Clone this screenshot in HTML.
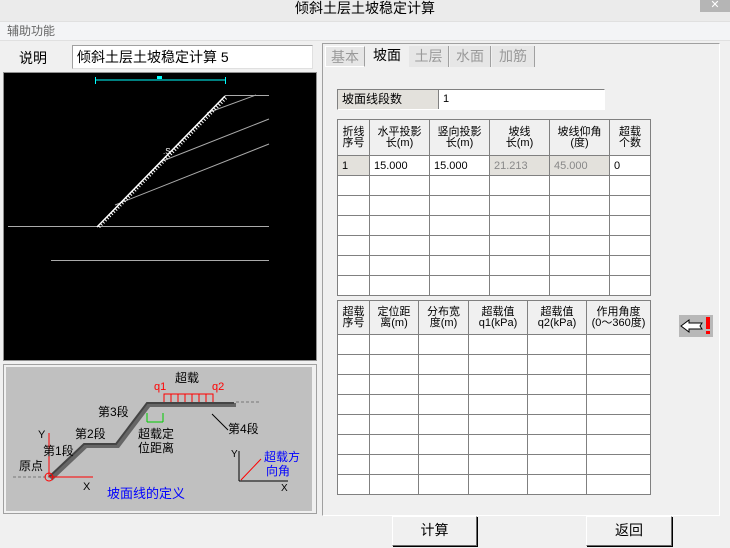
<!DOCTYPE html><html><head><meta charset="utf-8"><style>
*{margin:0;padding:0;box-sizing:border-box}
body{width:730px;height:548px;background:#f0f0f0;position:relative;overflow:hidden;font-family:"Liberation Sans","Noto Sans CJK SC",sans-serif;font-size:12px;color:#000}
.a{position:absolute}
table{border-collapse:collapse;position:absolute;table-layout:fixed;background:#fff}
td{border:1px solid #808080;height:20px;font-size:11px;padding:0 4px;white-space:nowrap;overflow:hidden}
th{border:1px solid #808080;background:#f0f0f0;font-weight:normal;font-size:11px;line-height:11px;text-align:center;white-space:nowrap}
.btn{position:absolute;background:#f0f0f0;border:1px solid #fff;border-right-color:#696969;border-bottom-color:#696969;box-shadow:1px 1px 0 #000;font-size:14px;text-align:center;line-height:27px}
</style></head><body>
<div class="a" style="left:0;top:0;width:730px;height:21px;background:#ebebeb;text-align:center;font-size:14px;line-height:16px">倾斜土层土坡稳定计算</div>
<div class="a" style="left:700px;top:0;width:30px;height:12px;background:#b5b5b5;color:#fff;text-align:center;font-size:11px;line-height:11px">✕</div>
<div class="a" style="left:0;top:21px;width:730px;height:20px;background:#f3f4f6;border-top:1px solid #e0e0e0;border-bottom:1px solid #e0e0e0;padding-left:7px;font-size:12px;line-height:18px;color:#666">辅助功能</div>
<div class="a" style="left:19px;top:48px;font-size:14px">说明</div>
<div class="a" style="left:72px;top:45px;width:241px;height:24px;background:#fff;border:1px solid #a0a0a0;border-right-color:#e0e0e0;border-bottom-color:#e0e0e0;font-size:14px;line-height:22px;padding-left:4px">倾斜土层土坡稳定计算 5</div>
<div class="a" style="left:3px;top:72px;width:314px;height:289px;background:#000;border:1px solid #909090;overflow:hidden">
<svg width="320" height="300" style="position:absolute;left:-4px;top:-73px">
<g stroke="#0ff" stroke-width="1"><line x1="95" y1="80" x2="225" y2="80"/><line x1="95.5" y1="77" x2="95.5" y2="84"/><line x1="225.5" y1="77" x2="225.5" y2="84"/></g>
<rect x="157" y="76" width="5" height="3" fill="#0ff"/>
<g stroke="#aaa" stroke-width="1"><line x1="225" y1="95.5" x2="269" y2="95.5"/><line x1="207" y1="113" x2="256" y2="95"/><line x1="160" y1="162" x2="269" y2="119"/><line x1="115" y1="205" x2="269" y2="144"/><line x1="8" y1="226.5" x2="269" y2="226.5"/><line x1="51" y1="260.5" x2="269" y2="260.5"/></g>
<line x1="97" y1="227" x2="225" y2="96" stroke="#fff" stroke-width="1.5"/>
<line x1="99" y1="227" x2="227" y2="97" stroke="#fff" stroke-width="3" stroke-dasharray="1 2"/>
<text x="163" y="154" fill="#fff" font-size="8">.S</text>
</svg></div>
<div class="a" style="left:3px;top:364px;width:314px;height:150px;background:#f0f0f0;border:1px solid #a0a0a0">
<div class="a" style="left:2px;top:2px;width:306px;height:144px;background:#c0c0c0;overflow:hidden">
<svg width="320" height="520" style="position:absolute;left:-5px;top:-366px">
<line x1="12" y1="476" x2="48" y2="476" stroke="#777" stroke-dasharray="3 2"/>
<line x1="235" y1="401" x2="258" y2="401" stroke="#777" stroke-dasharray="3 2"/>
<polyline points="50,478 85,445 117,445 148,404 235,404" fill="none" stroke="#666" stroke-width="4"/>
<polyline points="48,476 83,443 115,443 146,402 233,402" fill="none" stroke="#444" stroke-width="2"/>
<g stroke="#f00" fill="none"><line x1="48" y1="476" x2="92" y2="476"/><line x1="48" y1="476" x2="48" y2="432"/><circle cx="48" cy="476" r="4"/><polyline points="163,401 163,393 212,393 212,401"/><line x1="170" y1="393" x2="170" y2="401"/><line x1="177" y1="393" x2="177" y2="401"/><line x1="184" y1="393" x2="184" y2="401"/><line x1="191" y1="393" x2="191" y2="401"/><line x1="198" y1="393" x2="198" y2="401"/><line x1="205" y1="393" x2="205" y2="401"/><line x1="240" y1="479" x2="260" y2="458"/></g>
<g stroke="#0c0"><line x1="146" y1="412" x2="146" y2="421"/><line x1="162" y1="412" x2="162" y2="421"/><line x1="146" y1="421" x2="162" y2="421"/></g>
<line x1="211" y1="413" x2="227" y2="429" stroke="#000"/>
<g stroke="#000"><line x1="238" y1="450" x2="238" y2="480"/><line x1="238" y1="480" x2="287" y2="480"/></g>
<g font-size="12" font-family="Liberation Sans,Noto Sans CJK SC,sans-serif"><text x="174" y="381">超载</text><text x="153" y="389" fill="#f00" font-size="11">q1</text><text x="211" y="389" fill="#f00" font-size="11">q2</text>
<text x="97" y="415">第3段</text><text x="74" y="437">第2段</text><text x="42" y="454">第1段</text><text x="18" y="469">原点</text><text x="37" y="437" font-size="11">Y</text><text x="82" y="489" font-size="11">X</text>
<text x="137" y="437">超载定</text><text x="137" y="451">位距离</text><text x="227" y="432">第4段</text>
<text x="230" y="456" font-size="10">Y</text><text x="280" y="490" font-size="10">X</text>
<text x="263" y="460" fill="#00f">超载方</text><text x="265" y="474" fill="#00f">向角</text>
<text x="106" y="497" fill="#00f" font-size="13">坡面线的定义</text></g>
</svg></div></div>
<div class="a" style="left:322px;top:43px;width:398px;height:473px;border:1px solid #fff;border-left-color:#a0a0a0;border-top-color:#a0a0a0"></div>
<div class="a" style="left:325px;top:46px;width:40px;height:21px;border:1px solid #fff;border-right-color:#a0a0a0;font-size:14px;color:#999;text-align:center;line-height:20px;background:#e6e6e6">基本</div>
<div class="a" style="left:366px;top:44px;width:42px;height:23px;background:#f0f0f0;font-size:14px;text-align:center;line-height:22px">坡面</div>
<div class="a" style="left:409px;top:46px;width:40px;height:21px;border-right:1px solid #a0a0a0;font-size:14px;color:#999;text-align:center;line-height:20px;background:#e6e6e6">土层</div>
<div class="a" style="left:450px;top:46px;width:41px;height:21px;border-right:1px solid #a0a0a0;font-size:14px;color:#999;text-align:center;line-height:20px;background:#e6e6e6">水面</div>
<div class="a" style="left:492px;top:46px;width:43px;height:21px;border-right:1px solid #a0a0a0;font-size:14px;color:#999;text-align:center;line-height:20px;background:#e6e6e6">加筋</div>
<div class="a" style="left:337px;top:89px;width:268px;height:21px;border:1px solid #808080;border-right-color:#fff;border-bottom-color:#fff;background:#fff">
<div class="a" style="left:0;top:0;width:101px;height:19px;background:#e3e1dc;border-right:1px solid #808080;padding-left:4px;line-height:19px">坡面线段数</div>
<div class="a" style="left:105px;top:0;line-height:19px;font-size:11px">1</div></div>
<table style="left:337px;top:119px;width:313px">
<colgroup><col style="width:32px"><col style="width:60px"><col style="width:60px"><col style="width:60px"><col style="width:60px"><col style="width:41px"></colgroup>
<tr style="height:36px"><th>折线<br>序号</th><th>水平投影<br>长(m)</th><th>竖向投影<br>长(m)</th><th>坡线<br>长(m)</th><th>坡线仰角<br>(度)</th><th>超载<br>个数</th></tr>
<tr><td style="background:#e3e1dc">1</td><td>15.000</td><td>15.000</td><td style="background:#e3e1dc;color:#888">21.213</td><td style="background:#e3e1dc;color:#888">45.000</td><td>0</td></tr>
<tr><td></td><td></td><td></td><td></td><td></td><td></td></tr>
<tr><td></td><td></td><td></td><td></td><td></td><td></td></tr>
<tr><td></td><td></td><td></td><td></td><td></td><td></td></tr>
<tr><td></td><td></td><td></td><td></td><td></td><td></td></tr>
<tr><td></td><td></td><td></td><td></td><td></td><td></td></tr>
<tr style="height:16px"><td style="height:16px"></td><td></td><td></td><td></td><td></td><td></td></tr>
</table>
<table style="left:337px;top:300px;width:313px">
<colgroup><col style="width:32px"><col style="width:49px"><col style="width:50px"><col style="width:59px"><col style="width:59px"><col style="width:64px"></colgroup>
<tr style="height:34px"><th>超载<br>序号</th><th>定位距<br>离(m)</th><th>分布宽<br>度(m)</th><th>超载值<br>q1(kPa)</th><th>超载值<br>q2(kPa)</th><th>作用角度<br>(0～360度)</th></tr>
<tr><td></td><td></td><td></td><td></td><td></td><td></td></tr>
<tr><td></td><td></td><td></td><td></td><td></td><td></td></tr>
<tr><td></td><td></td><td></td><td></td><td></td><td></td></tr>
<tr><td></td><td></td><td></td><td></td><td></td><td></td></tr>
<tr><td></td><td></td><td></td><td></td><td></td><td></td></tr>
<tr><td></td><td></td><td></td><td></td><td></td><td></td></tr>
<tr><td></td><td></td><td></td><td></td><td></td><td></td></tr>
<tr><td style="height:10px"></td><td></td><td></td><td></td><td></td><td></td></tr>
</table>
<div class="a" style="left:679px;top:315px;width:34px;height:22px;background:#b8b8b8">
<svg width="34" height="22"><polygon points="2,11 10,5 10,8 23,8 21,11 23,14 10,14 10,17" fill="#fff" stroke="#000"/><rect x="27" y="2" width="4" height="12" fill="#f00"/><rect x="27" y="16" width="4" height="3" fill="#f00"/></svg></div>
<div class="btn" style="left:392px;top:516px;width:85px;height:30px">计算</div>
<div class="btn" style="left:586px;top:516px;width:86px;height:30px">返回</div>
</body></html>
